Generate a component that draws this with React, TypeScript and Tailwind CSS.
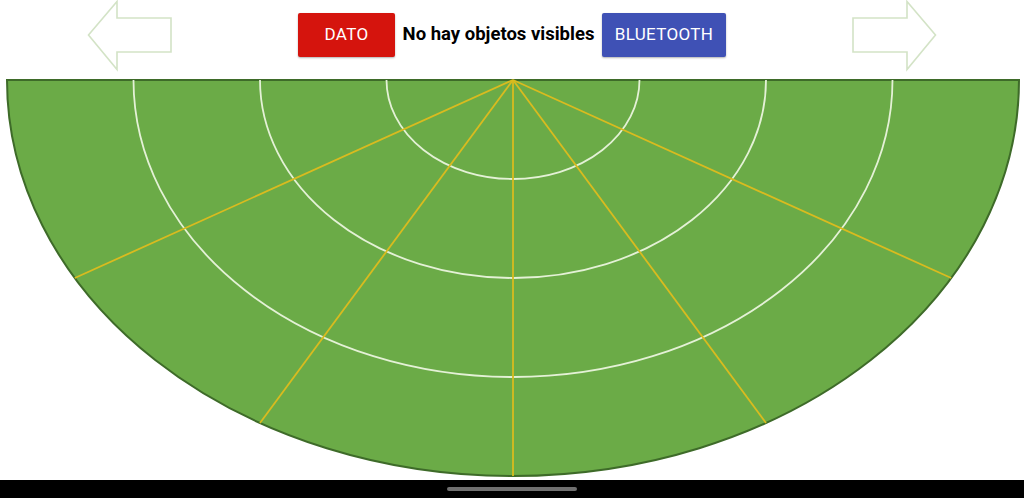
import React from "react";

const CX = 513;
const CY = 2;
const RX = 506;
const RY = 396;

const rings = [0.25, 0.5, 0.75];
const angles = [30, 60, 90, 120, 150];

const Arrow = ({ flip }: { flip?: boolean }) => (
  <svg
    width="86"
    height="72"
    viewBox="0 0 86 72"
    className={flip ? "-scale-x-100" : ""}
  >
    <polygon
      points="1.5,35 30,1.5 30,18 84,18 84,52 30,52 30,69.5"
      fill="white"
      stroke="#d3e3c6"
      strokeWidth="1.6"
      strokeLinejoin="miter"
    />
  </svg>
);

const Radar = () => (
  <svg width="1024" height="402" viewBox="0 0 1024 402" className="block">
    <path
      d={`M ${CX - RX} ${CY} A ${RX} ${RY} 0 0 0 ${CX + RX} ${CY} Z`}
      fill="#6bab47"
      stroke="#3e6b29"
      strokeWidth="2"
    />
    {rings.map((f) => (
      <path
        key={f}
        d={`M ${CX - RX * f} ${CY} A ${RX * f} ${RY * f} 0 0 0 ${CX + RX * f} ${CY}`}
        fill="none"
        stroke="#e4f1d6"
        strokeWidth="1.8"
      />
    ))}
    {angles.map((a) => {
      const r = (a * Math.PI) / 180;
      return (
        <line
          key={a}
          x1={CX}
          y1={CY}
          x2={CX + RX * Math.cos(r)}
          y2={CY + RY * Math.sin(r)}
          stroke="#d9bb1f"
          strokeWidth="1.8"
        />
      );
    })}
  </svg>
);

export default function App() {
  return (
    <div
      className="w-[1024px] h-[498px] bg-white flex flex-col overflow-hidden"
      style={{ fontFamily: "Roboto, 'Liberation Sans', sans-serif" }}
    >
      <div className="h-[78px] flex items-start justify-between px-[87px]">
        <Arrow />
        <div className="flex items-center gap-[7px] mt-[13px]">
          <button className="w-[97px] h-[44px] bg-[#d5140d] text-white text-[17px] tracking-[0.02em] rounded-[2px] shadow-[0_1px_2px_rgba(0,0,0,0.3)]">
            DATO
          </button>
          <span className="w-[193px] whitespace-nowrap text-center text-[18.5px] font-bold text-black">
            No hay objetos visibles
          </span>
          <button className="w-[124px] h-[44px] bg-[#3f51b5] text-white text-[17px] tracking-[0.02em] rounded-[2px] shadow-[0_1px_2px_rgba(0,0,0,0.3)]">
            BLUETOOTH
          </button>
        </div>
        <Arrow flip />
      </div>
      <Radar />
      <div className="h-[18px] bg-black flex items-center justify-center">
        <div className="w-[130px] h-[4px] rounded-full bg-[#707070]" />
      </div>
    </div>
  );
}
